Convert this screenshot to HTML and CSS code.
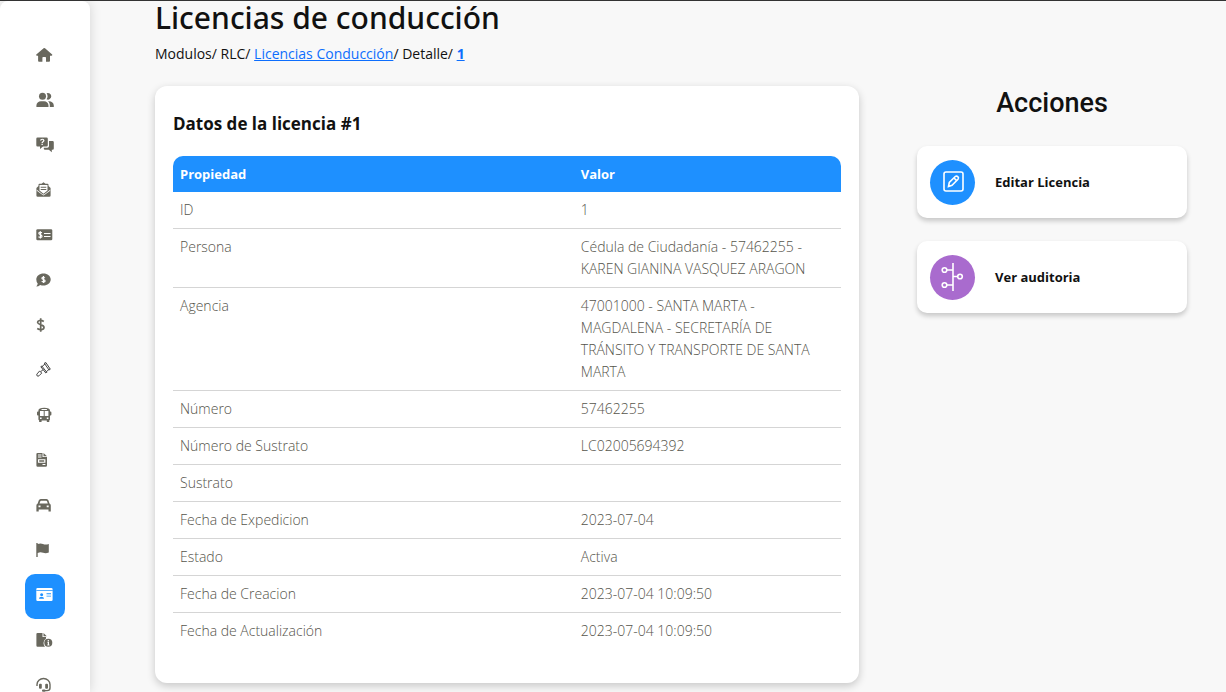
FILE: index.html
```html
<!DOCTYPE html>
<html lang="es">
<head>
    <meta charset="UTF-8">
    <meta name="viewport" content="width=device-width, initial-scale=1">
    <title>Licencias de conducción</title>
    <link rel="stylesheet" href="styles.css">
</head>
<body>

<nav class="sidebar">
    <a href="#" aria-label="Inicio">
        <svg viewBox="0 0 18 16"><path d="M7.600 1.300q.7-.6 1.400 0l7.200 6.200q.3.900-.7 1.200H14v5.100q0 .9-.9.900H10V10.800q0-.8-.8-.8H7.200q-.8 0-.8.800V14.700H3q-.9 0-.9-.9V8.700H.9Q-.1 8.400.3 7.500z"/></svg>
    </a>
    <a href="#" aria-label="Usuarios">
        <svg viewBox="0 0 18 16"><circle cx="6.500" cy="4.300" r="3.500"/><path d="M.4 15v-1.500C.4 11 2.500 9.200 5 9.200h3c2.500 0 4.500 1.800 4.500 4.300V15zM10.600 1.300a3.300 3.300 0 1 1 0 6 5.500 5.500 0 0 0 0-6zM12 9.300c3.500-.3 5.800 1.500 5.800 4.200V15h-4v-1.500c0-1.700-.6-3.200-1.800-4.200z"/></svg>
    </a>
    <a href="#" aria-label="Preguntas">
        <svg viewBox="0 0 18 16"><path fill-rule="evenodd" d="M1.500.5h9q1.300 0 1.300 1.300v6.400q0 1.300-1.300 1.300H7L4 12V9.500H1.500Q.3 9.500.3 8.200V1.800Q.3.5 1.500.5zM4 3.600h1.300q.2-.8 1-.8.900 0 .9.700 0 .5-.9 1-.8.500-.8 1.500h1.300q0-.5.800-1 .900-.6.900-1.500 0-1.800-2.200-1.800T4 3.600zM5.500 6.800v1.300h1.300V6.800z"/><path d="M13 4h3.500q1.300 0 1.300 1.300v6.200q0 1.300-1.300 1.300h-.7V15.200l-3-2.400H9q-1.200 0-1.200-1.200v-.8h3.500q1.700 0 1.700-1.700z"/></svg>
    </a>
    <a href="#" aria-label="Correo">
        <svg viewBox="0 0 18 16"><path d="M.4 6L2.500 4V2.800q0-1 1-1H5.500L7.500.3l2 1.500h2q1 0 1 1V4l2.100 2v7.500q0 1.300-1.300 1.300H1.700Q.4 14.800.4 13.500z"/><path class="cut" d="M3.500 3h8v5.500l-4 3.200-4-3.200zM.8 7.800l5.800 4.500q.9.600 1.800 0l5.800-4.500v1l-5.800 4.300q-.9.600-1.800 0L.8 8.800z"/><path d="M4.700 4.800h5.600v1H4.700zM4.700 7h5.600v1H4.700z"/></svg>
    </a>
    <a href="#" aria-label="Pagos">
        <svg viewBox="0 0 18 16"><rect x=".3" y="2.300" width="16" height="11" rx="1.300"/><path class="cut-line" d="M6 5.700Q3 4.500 2.800 6.200C2.700 7.800 6 7.500 6 9.200 6 11 3.500 10.500 2.500 9.800M4.400 4.200v7.300M8 6.500h6.500M8 9.500h6.500"/></svg>
    </a>
    <a href="#" aria-label="Comparendos">
        <svg viewBox="0 0 18 16"><path d="M7.500 1.500c4 0 7.200 2.600 7.200 6s-3.200 6-7.200 6q-1.800 0-3.300-.6Q2.300 14.500.3 14.500q1.300-1.300 1.400-3Q.3 9.800.3 7.500c0-3.400 3.200-6 7.200-6z"/><path class="cut-line" d="M9 5.800Q6 4.500 5.900 6.200C5.800 7.800 9.100 7.200 9.100 8.900 9 10.500 6.700 10 5.700 9.300M7.500 4v7"/></svg>
    </a>
    <a href="#" aria-label="Dinero">
        <svg viewBox="0 0 18 16"><path class="line thick" d="M7.800 4.500Q5.500 3 3.500 3.500 1.500 4 1.600 5.500C1.800 8 8 7.300 8 10.300c0 2.800-4 2.800-6.800 1.200M4.700 1.200v13.600"/></svg>
    </a>
    <a href="#" aria-label="Sanciones">
        <svg viewBox="0 0 18 16"><path class="line dark" d="M5.300 5.200L9.300 1.700M10.200 9.800l3-2.500M8.300 1.200l1.500-.7 4.500 6.700-1.300.8zM4.800 4.700l1-.7 5 6.300-1 .7zM7.300 7.500L5 9.400M3.700 8.900l2 2.200-2.700 2.700q-1 .8-1.900 0t0-1.900z"/></svg>
    </a>
    <a href="#" aria-label="Transporte público">
        <svg viewBox="0 0 18 16"><path fill-rule="evenodd" d="M8.200.8c3.700 0 5.800 1 5.800 2.700V4.500h.5q.9 0 .9.900v2.200q0 .9-.9.900H14v3.700q0 .9-.7 1.100v1.100q0 .6-.6.600h-1.300q-.6 0-.6-.6V13.400H5.600v1q0 .6-.6.600H3.700q-.6 0-.6-.6V13.300q-.7-.2-.7-1.100V8.500h-.5Q1 8.500 1 7.600V5.400q0-.9.900-.9h.5v-1C2.400 1.800 4.500.8 8.200.8zM4 4v5h3.700V4zM8.700 4v5h3.700V4zM5.500 2.100v.8h5.400v-.8zM4 10.500v1.400h1.600v-1.400zM10.800 10.500v1.400h1.600v-1.400z"/></svg>
    </a>
    <a href="#" aria-label="Facturas">
        <svg viewBox="0 0 18 16"><path fill-rule="evenodd" d="M1.500 1h5v4H11v8.500q0 1.300-1.300 1.300H1.600Q.4 14.800.4 13.500V2Q.4 1 1.500 1zM7.500 1L11 4.200H7.500zM2 2.600v1h3.500v-1zM2 4.600v1h3.500v-1zM2 7.300v3.500h7.400V7.300zM3.200 8.300h5v1.500H3.200zM6.500 12.100v1h2.900v-1z"/></svg>
    </a>
    <a href="#" aria-label="Vehículos">
        <svg viewBox="0 0 18 16"><path fill-rule="evenodd" d="M4.800 2h5.700q1.500 0 2 1.500l1 3q1.300.6 1.300 2v6h-2.300V12.500H2.700v2H.4v-6q0-1.400 1.300-2l1-3Q3.200 2 4.800 2zM5 3.700q-.5 0-.7.500L3.500 6.500h8.300L11 4.200q-.2-.5-.7-.5zM2.500 8.500v1.700h2V8.500zM10.700 8.500v1.700h2V8.500z"/></svg>
    </a>
    <a href="#" aria-label="Banderas">
        <svg viewBox="0 0 18 16"><path d="M.3 1h1.400v1Q4.500 1 7 2t5.800 0v8.500q-3 1.300-5.700.3T1.700 11v4H.3z"/></svg>
    </a>
    <a href="#" class="active" aria-label="Licencias">
        <svg viewBox="0 0 18 16"><path fill-rule="evenodd" d="M1.500 1h13.800q1.300 0 1.300 1.300v10.400q0 1.300-1.300 1.300H1.500Q.3 14 .3 12.700V2.300Q.3 1 1.500 1zM.5 3.300v.7h16v-.7zM5.600 6.200a1.500 1.500 0 1 0 .1 0zM3 11.800h5q0-1.800-1.600-1.800H4.600Q3 10 3 11.800zM10.500 6.300v.9H15v-.9zM10.500 8.700v.9H15v-.9z"/></svg>
    </a>
    <a href="#" aria-label="Información">
        <svg viewBox="0 0 18 16"><path d="M1.500 1h5v4H10v1.500Q7.500 8 7.500 11q0 2.300 1.500 3.700H1.500Q.4 14.700.4 13.500V2Q.4 1 1.500 1zM7.500 1L10.800 4.200H7.500z"/><circle cx="12.300" cy="10.800" r="4"/><path class="cut-line" d="M12.300 8v1.300M11.500 10.400h.9V13M11.300 13h2.200"/></svg>
    </a>
    <a href="#" aria-label="Soporte">
        <svg viewBox="0 0 18 16"><path class="line" d="M1 9V7.500a6.500 6 0 0 1 13 0V11q0 2.600-3 2.600H8.500"/><rect x="3" y="6.800" width="2.800" height="5" rx="1"/><rect x="9.200" y="6.800" width="2.800" height="5" rx="1"/><rect x="6" y="12.500" width="3.500" height="2.300" rx="1"/></svg>
    </a>
</nav>

<main class="content">
    <h1>Licencias de conducción</h1>
    <p class="breadcrumb">Modulos/ RLC/ <a href="#">Licencias Conducción</a>/ Detalle/ <a href="#"><b>1</b></a></p>

    <div class="columns">
        <section class="card">
            <h2>Datos de la licencia #1</h2>
            <table>
                <thead>
                    <tr><th>Propiedad</th><th>Valor</th></tr>
                </thead>
                <tbody>
                    <tr><td>ID</td><td>1</td></tr>
                    <tr><td>Persona</td><td>Cédula de Ciudadanía - 57462255 - KAREN GIANINA VASQUEZ ARAGON</td></tr>
                    <tr><td>Agencia</td><td>47001000 - SANTA MARTA - MAGDALENA - SECRETARÍA DE TRÁNSITO Y TRANSPORTE DE SANTA MARTA</td></tr>
                    <tr><td>Número</td><td>57462255</td></tr>
                    <tr><td>Número de Sustrato</td><td>LC02005694392</td></tr>
                    <tr><td>Sustrato</td><td></td></tr>
                    <tr><td>Fecha de Expedicion</td><td>2023-07-04</td></tr>
                    <tr><td>Estado</td><td>Activa</td></tr>
                    <tr><td>Fecha de Creacion</td><td>2023-07-04 10:09:50</td></tr>
                    <tr><td>Fecha de Actualización</td><td>2023-07-04 10:09:50</td></tr>
                </tbody>
            </table>
        </section>

        <aside class="actions">
            <h2>Acciones</h2>
            <a href="#" class="action">
                <span class="circle blue">
                    <svg viewBox="0 0 28 28"><rect x="5" y="4" width="19" height="19" rx="2"/><path d="M9.500 18.500l.8-4 6-6q1.200-1 2.500.2t.2 2.500l-6 6zM15 10l2.600 2.600"/></svg>
                </span>
                Editar Licencia
            </a>
            <a href="#" class="action">
                <span class="circle purple">
                    <svg viewBox="0 0 28 28"><path d="M14 0v28M8 7h6M8 22h6M14 13.500h4.500"/><circle cx="5.500" cy="7" r="2.300"/><circle cx="5.500" cy="22" r="2.300"/><circle cx="21" cy="13.500" r="2.300"/></svg>
                </span>
                Ver auditoria
            </a>
        </aside>
    </div>
</main>

</body>
</html>
```
FILE: styles.css
```css
* {box-sizing: border-box;}

body {
    display: flex;
    margin: 0;
    height: 100vh;
    overflow: hidden;
    border-top: 1px solid #333;
    background: #f8f8f8;
    color: #111;
    font-family: "Open Sans", sans-serif;
    font-size: 14px;
    line-height: 22px;
}

h1, h2, p {margin: 0;}

/* Side menu, icons only */
.sidebar {
    flex: none;
    width: 90px;
    padding: 33px 25px 0;
    overflow: hidden;
    background: #fff;
    border-radius: 8px 8px 0 0;
    box-shadow: 0 0 12px rgba(0, 0, 0, 0.15);
}

.sidebar a {
    display: block;
    height: 45px;
    padding: 13px 11px;
    border-radius: 10px;
}

.sidebar svg {
    display: block;
    width: 18px;
    height: 16px;
    fill: #69685e;
}

.sidebar .active {background: #1e90ff;}
.sidebar .active svg {fill: #fff;}
.sidebar .cut {fill: #fff;}

.sidebar .cut-line {
    fill: none;
    stroke: #fff;
    stroke-width: 1.2;
}

.sidebar .line {
    fill: none;
    stroke: #69685e;
    stroke-width: 1.4;
}

.sidebar .thick {stroke-width: 1.7;}

.sidebar .dark {
    stroke: #444;
    stroke-width: 1;
}

/* Page content */
.content {
    flex: 1;
    padding: 0 39px 0 65px;
}

h1 {
    font-family: "Noto Sans", sans-serif;
    font-size: 30px;
    font-weight: 500;
    line-height: 34px;
}

.breadcrumb {
    margin-top: 8px;
    font-size: 14px;
}

.breadcrumb a {color: #0d6efd;}

.columns {
    display: grid;
    grid-template-columns: 1fr 270px;
    align-items: start;
    gap: 58px;
    margin-top: 21px;
}

.card {
    padding: 26px 18px 33px;
    background: #fff;
    border-radius: 12px;
    box-shadow: 0 3px 8px rgba(0, 0, 0, 0.2);
}

.card h2 {
    margin-bottom: 20px;
    font-size: 17px;
    font-weight: 700;
    line-height: 24px;
}

table {
    width: 100%;
    table-layout: fixed;
    border-collapse: separate;
    border-spacing: 0;
}

th, td {
    padding: 7px;
    text-align: left;
    vertical-align: top;
}

th {
    background: #1e90ff;
    color: #fff;
    font-size: 13px;
    font-weight: 700;
}

th:first-child {
    width: 60%;
    border-radius: 10px 0 0 0;
}

th:last-child {border-radius: 0 10px 0 0;}

td {
    height: 37px;
    border-bottom: 1px solid #d5d5d5;
    color: #55544b;
    font-weight: 300;
}

tr:last-child td {border-bottom: none;}

/* Actions on the right */
.actions h2 {
    margin-bottom: 25px;
    font-family: Roboto, sans-serif;
    font-size: 27px;
    font-weight: 500;
    line-height: 35px;
    text-align: center;
}

.action {
    display: flex;
    align-items: center;
    gap: 20px;
    height: 72px;
    margin-bottom: 23px;
    padding: 0 13px;
    background: #fff;
    border-radius: 10px;
    box-shadow: 0 3px 5px rgba(0, 0, 0, 0.2);
    color: #111;
    font-size: 13px;
    font-weight: 700;
    text-decoration: none;
}

.circle {
    display: flex;
    align-items: center;
    justify-content: center;
    width: 45px;
    height: 45px;
    border-radius: 50%;
}

.circle svg {
    width: 28px;
    height: 28px;
    fill: none;
    stroke: #fff;
    stroke-width: 1.6;
}

.blue {background: #1e90ff;}
.purple {background: #a96bce;}
```
